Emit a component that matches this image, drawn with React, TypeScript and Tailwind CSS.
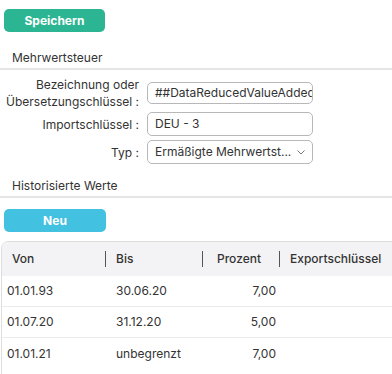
import React from "react";

const font = { fontFamily: "Inter, 'Noto Sans', sans-serif" };

function Row({ label, children, h }: { label: React.ReactNode; children: React.ReactNode; h: string }) {
  return (
    <div className={`flex items-center ${h}`}>
      <div className="w-[140px] shrink-0 text-right pr-[1px] text-[12px] leading-[17px] text-[#333] whitespace-nowrap">{label}</div>
      <div className="ml-[7px] w-[166px]">{children}</div>
    </div>
  );
}

export default function App() {
  const rows = [
    ["01.01.93", "30.06.20", "7,00"],
    ["01.07.20", "31.12.20", "5,00"],
    ["01.01.21", "unbegrenzt", "7,00"],
  ];
  return (
    <div className="w-[392px] h-[374px] overflow-hidden bg-white text-[#333]" style={font}>
      <div className="pt-[9px] pl-1 flex">
        <button className="h-[23px] w-[101px] rounded-[5px] bg-[#2bb592] text-white text-[12px] leading-[23px] font-bold">Speichern</button>
      </div>
      <div className="mt-[18px] pl-3 pb-[2px] border-b-2 border-[#e6e6e6] text-[12px] leading-[16px]">Mehrwertsteuer</div>
      <div className="mt-[6px]">
        <Row h="h-[34px]" label={<><div>Bezeichnung oder</div><div>Übersetzungschlüssel :</div></>}>
          <div className="h-[22px] rounded-[5px] border border-[#b8b8b8] px-[7px] flex items-center overflow-hidden whitespace-nowrap text-[12px]">##DataReducedValueAddedTax</div>
        </Row>
        <div className="mt-[2px]">
          <Row h="h-[24px]" label="Importschlüssel :">
            <div className="h-[24px] rounded-[5px] border border-[#b8b8b8] px-[7px] flex items-center text-[12px]">DEU - 3</div>
          </Row>
        </div>
        <div className="mt-[4px]">
          <Row h="h-[24px]" label="Typ :">
            <div className="h-[24px] rounded-[5px] border border-[#b8b8b8] pl-[7px] pr-[7px] flex items-center justify-between text-[12px]">
              <span className="whitespace-nowrap">Ermäßigte Mehrwertst...</span>
              <svg width="8" height="5" viewBox="0 0 8 5" fill="none" stroke="#777" strokeWidth="1"><path d="M0.5 0.5l3.5 3.5L7.5 0.5" /></svg>
            </div>
          </Row>
        </div>
      </div>
      <div className="mt-[14px] pl-3 pb-[2px] border-b-2 border-[#e6e6e6] text-[12px] leading-[16px]">Historisierte Werte</div>
      <div className="mt-[11px] pl-1 flex">
        <button className="h-[23px] w-[102px] rounded-[5px] bg-[#42c1e0] text-white text-[12px] leading-[23px] font-bold">Neu</button>
      </div>
      <div className="mt-[9px] ml-[1px] w-[420px] border border-[#dedede] rounded-tl-[7px] h-[140px] text-[12px]">
        <div className="flex h-[34px] items-center bg-[#f3f3f5] rounded-tl-[7px] font-medium">
          <div className="w-[104px] pl-[10px] flex items-center justify-between">Von<span className="w-[1.5px] h-[16px] bg-[#555]" /></div>
          <div className="w-[97px] pl-[10px] flex items-center justify-between">Bis<span className="w-[1.5px] h-[16px] bg-[#555]" /></div>
          <div className="w-[77px] pl-[14px] flex items-center justify-between">Prozent<span className="w-[1.5px] h-[16px] bg-[#555]" /></div>
          <div className="pl-[10px]">Exportschlüssel</div>
        </div>
        {rows.map((r, i) => (
          <div key={i} className={`flex items-center h-[31px] ${i < 2 ? "border-b border-[#ececec]" : ""}`}>
            <div className="w-[104px] pl-[5px]">{r[0]}</div>
            <div className="w-[97px] pl-[10px]">{r[1]}</div>
            <div className="w-[73px] text-right">{r[2]}</div>
          </div>
        ))}
      </div>
    </div>
  );
}
